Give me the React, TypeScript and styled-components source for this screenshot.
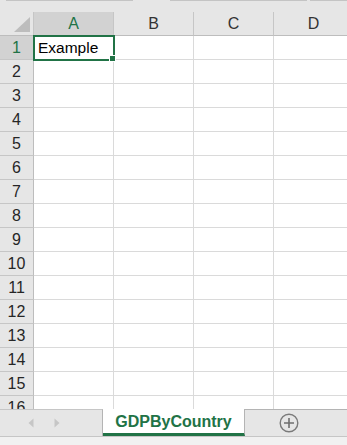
import React from 'react';
import styled, { createGlobalStyle } from 'styled-components';

const GlobalStyle = createGlobalStyle`
  html, body {
    margin: 0;
    padding: 0;
    background: #ffffff;
    overflow: hidden;
  }
`;

const green = '#217346';
const columns = ['A', 'B', 'C', 'D'];
const rows = Array.from({ length: 16 }, (_, i) => i + 1);

const Window = styled.div`
  width: 347px;
  height: 445px;
  display: flex;
  flex-direction: column;
  font-family: "Liberation Sans", Arial, sans-serif;
  background: #ffffff;
  overflow: hidden;
`;

const TopStrip = styled.div`
  height: 12px;
  flex: none;
  background: #e6e6e6;
  display: flex;
  align-items: flex-start;
`;

const StripLine = styled.div<{ $w: number; $gap: number }>`
  width: ${p => p.$w}px;
  margin-left: ${p => p.$gap}px;
  height: 1px;
  background: #c4c4c4;
`;

const Sheet = styled.div`
  flex: 1;
  overflow: hidden;
  display: grid;
  grid-template-columns: 34px repeat(4, 80px);
  grid-auto-rows: 24px;
`;

const Corner = styled.div`
  background: #e6e6e6;
  border-right: 1px solid #c6c6c6;
  border-bottom: 1px solid #bdbdbd;
  display: flex;
  align-items: flex-end;
  justify-content: flex-end;
  padding: 0 3px 3px 0;
`;

const ColHeader = styled.div<{ $active?: boolean }>`
  background: ${p => (p.$active ? '#d2d2d2' : '#e6e6e6')};
  color: ${p => (p.$active ? green : '#333333')};
  border-right: 1px solid #c6c6c6;
  border-bottom: 1px solid ${p => (p.$active ? green : '#bdbdbd')};
  display: flex;
  align-items: center;
  justify-content: center;
  font-size: 16px;
  padding-top: 1px;
`;

const RowHeader = styled.div<{ $active?: boolean }>`
  background: ${p => (p.$active ? '#d2d2d2' : '#e6e6e6')};
  color: ${p => (p.$active ? green : '#262626')};
  border-right: 1px solid ${p => (p.$active ? green : '#bdbdbd')};
  border-bottom: 1px solid #c6c6c6;
  display: flex;
  align-items: center;
  justify-content: center;
  font-size: 16px;
`;

const Cell = styled.div<{ $selected?: boolean }>`
  position: relative;
  border-right: 1px solid #dadada;
  border-bottom: 1px solid #dadada;
  display: flex;
  align-items: center;
  padding-left: 4px;
  font-size: 15.5px;
  color: #000000;
  outline: ${p => (p.$selected ? `2px solid ${green}` : 'none')};
  outline-offset: -1px;
  z-index: ${p => (p.$selected ? 1 : 0)};
`;

const FillHandle = styled.span`
  position: absolute;
  right: -3px;
  bottom: -3px;
  width: 5px;
  height: 5px;
  background: ${green};
  border: 1px solid #ffffff;
`;

const TabBar = styled.div`
  height: 27px;
  flex: none;
  display: flex;
  background: #e6e6e6;
`;

const NavArea = styled.div`
  width: 103px;
  border-top: 1px solid #c6c6c6;
  border-right: 1px solid #b4b4b4;
  display: flex;
  align-items: center;
  gap: 20px;
  padding-left: 28px;
  box-sizing: border-box;
`;

const SheetTab = styled.div`
  width: 142px;
  background: #ffffff;
  border-right: 1px solid #b4b4b4;
  border-bottom: 3px solid ${green};
  box-sizing: border-box;
  display: flex;
  align-items: center;
  justify-content: center;
  color: ${green};
  font-weight: bold;
  font-size: 16px;
  padding-top: 2px;
`;

const AddArea = styled.div`
  flex: 1;
  border-top: 1px solid #b4b4b4;
  display: flex;
  align-items: center;
  padding-left: 34px;
`;

const StatusStrip = styled.div`
  height: 8px;
  flex: none;
  background: #f1f1f1;
  border-top: 1px solid #c6c6c6;
`;

const Arrow = ({ dir }: { dir: 'left' | 'right' }) => (
  <svg width="6" height="10" viewBox="0 0 6 10">
    <path d={dir === 'left' ? 'M5.5 0.5 L0.5 5 L5.5 9.5 Z' : 'M0.5 0.5 L5.5 5 L0.5 9.5 Z'} fill="#c6c6c6" />
  </svg>
);

const PlusCircle = () => (
  <svg width="20" height="20" viewBox="0 0 20 20">
    <circle cx="10" cy="10" r="8.8" fill="none" stroke="#7a7a7a" strokeWidth="1.4" />
    <path d="M10 5 V15 M5 10 H15" stroke="#6f6f6f" strokeWidth="1.6" />
  </svg>
);

export default function App() {
  return (
    <Window>
      <GlobalStyle />
      <TopStrip>
        <StripLine $gap={6} $w={127} />
        <StripLine $gap={37} $w={137} />
        <StripLine $gap={3} $w={37} />
      </TopStrip>
      <Sheet>
        <Corner>
          <svg width="16" height="15" viewBox="0 0 16 15">
            <path d="M16 0 L16 15 L0 15 Z" fill="#bdbdbd" />
          </svg>
        </Corner>
        {columns.map(c => (
          <ColHeader key={c} $active={c === 'A'}>{c}</ColHeader>
        ))}
        {rows.map(r => (
          <React.Fragment key={r}>
            <RowHeader $active={r === 1}>{r}</RowHeader>
            {columns.map(c => {
              const selected = r === 1 && c === 'A';
              return (
                <Cell key={c} $selected={selected}>
                  {selected && 'Example'}
                  {selected && <FillHandle />}
                </Cell>
              );
            })}
          </React.Fragment>
        ))}
      </Sheet>
      <TabBar>
        <NavArea>
          <Arrow dir="left" />
          <Arrow dir="right" />
        </NavArea>
        <SheetTab>GDPByCountry</SheetTab>
        <AddArea>
          <PlusCircle />
        </AddArea>
      </TabBar>
      <StatusStrip />
    </Window>
  );
}
